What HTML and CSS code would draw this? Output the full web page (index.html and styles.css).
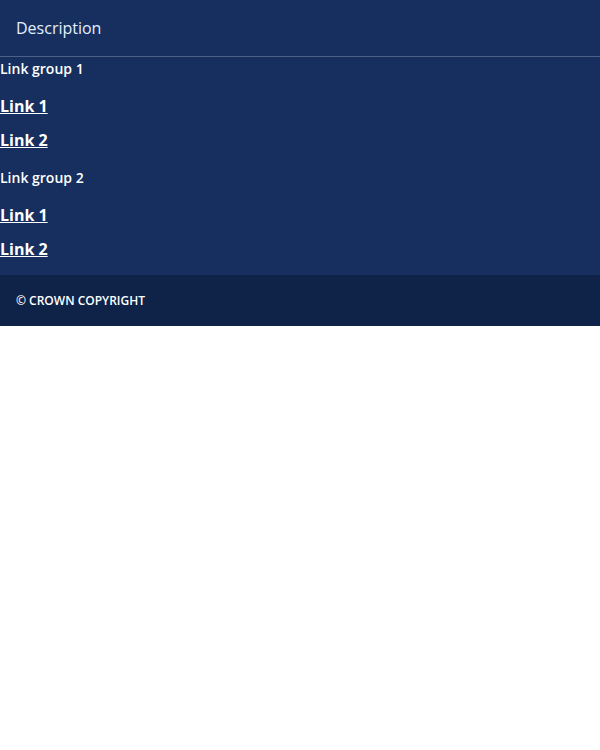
FILE: index.html
```html
<!DOCTYPE html>
<html lang="en">
<head>
<meta charset="utf-8">
<title>Footer</title>
<link rel="stylesheet" href="styles.css">
</head>
<body>
<footer class="site-footer">
  <div class="footer-header">Description</div>
  <nav class="footer-nav">
    <div class="link-group">
      <h3 class="group-title">Link group 1</h3>
      <ul class="link-list">
        <li><a href="#">Link 1</a></li>
        <li><a href="#">Link 2</a></li>
      </ul>
    </div>
    <div class="link-group">
      <h3 class="group-title">Link group 2</h3>
      <ul class="link-list">
        <li><a href="#">Link 1</a></li>
        <li><a href="#">Link 2</a></li>
      </ul>
    </div>
  </nav>
  <div class="footer-bottom">© CROWN COPYRIGHT</div>
</footer>
</body>
</html>
```
FILE: styles.css
```css
html, body {
  margin: 0;
  padding: 0;
  background: #ffffff;
}
body {
  font-family: "Open Sans", "Noto Sans", sans-serif;
}
.site-footer {
  background: #162f5f;
  color: #ffffff;
}
.footer-header {
  height: 56px;
  line-height: 56px;
  padding: 0 16px;
  font-size: 16px;
  color: #e3efff;
  border-bottom: 1px solid #4c6185;
}
.footer-nav {
  display: flex;
  flex-direction: column;
  gap: 16px;
  padding: 2px 0 14px;
}
.group-title {
  margin: 0;
  font-size: 14px;
  line-height: 20px;
  font-weight: 600;
}
.link-list {
  list-style: none;
  margin: 15px 0 0;
  padding: 0;
  display: flex;
  flex-direction: column;
  gap: 10px;
}
.link-list li {
  line-height: 24px;
}
.link-list a {
  color: #ffffff;
  font-size: 16px;
  font-weight: 700;
  text-decoration: underline;
}
.footer-bottom {
  background: #0f2349;
  padding: 16px;
  font-size: 12px;
  line-height: 19px;
  font-weight: 600;
}
```
